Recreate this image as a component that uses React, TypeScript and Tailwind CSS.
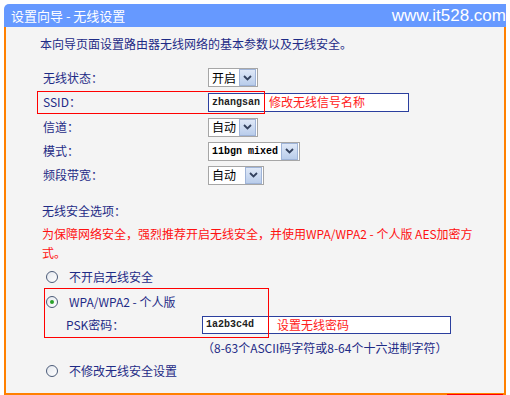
import React from "react";

const cjk = { fontFamily: '"Noto Sans CJK SC", "Liberation Sans", sans-serif' };
const mono = { fontFamily: '"Liberation Mono", "Noto Sans CJK SC", monospace' };

const Arrow = () => (
    <span className="mr-px flex h-[17px] w-[17px] items-center justify-center border border-[#9fb4d8] bg-gradient-to-b from-[#dfe8f7] to-[#b9cdeb]">
        <svg width="9" height="6" viewBox="0 0 9 6">
            <path d="M1 1 L4.5 4.5 L8 1" stroke="#33415e" strokeWidth="1.8" fill="none" />
        </svg>
    </span>
);

const Select = ({ value, width, isMono }: { value: string; width: string; isMono?: boolean }) => (
    <div className={`flex h-[19px] ${width} items-center border border-[#a6a6a6] bg-white`}>
        <span className={`flex-1 whitespace-nowrap pl-[3px] text-black ${isMono ? "text-[10px] font-bold" : "text-[12px]"}`} style={isMono ? mono : cjk}>
            {value}
        </span>
        <Arrow />
    </div>
);

const Radio = ({ checked }: { checked?: boolean }) => (
    <span className="flex h-[12px] w-[12px] items-center justify-center rounded-full border border-[#4b5b78] bg-gradient-to-br from-[#e4e8ee] to-white">
        {checked && <span className="h-[4px] w-[4px] rounded-full bg-[#2aa12a]" />}
    </span>
);

const rows = [
    { label: "无线状态：", h: "h-[23px]", field: <Select value="开启" width="w-[50px]" /> },
    {
        label: "SSID：",
        h: "h-[26px]",
        field: (
            <div className="flex h-[19px] w-[201px] items-center border border-[#2b3f9e] bg-white">
                <span className="pl-[3px] text-[10px] font-bold text-[#222]" style={mono}>zhangsan</span>
                <span className="ml-[9px] text-[12px] text-[#ff2020]" style={cjk}>修改无线信号名称</span>
            </div>
        ),
    },
    { label: "信道：", h: "h-[24px]", field: <Select value="自动" width="w-[50px]" /> },
    { label: "模式：", h: "h-[24px]", field: <Select value="11bgn mixed" width="w-[92px]" isMono /> },
    { label: "频段带宽：", h: "h-[24px]", field: <Select value="自动" width="w-[56px]" /> },
];

export default function App() {
    return (
        <div className="h-[395px] w-[510px] bg-white pl-[4px] pt-[4px]" style={cjk}>
            <div className="flex h-[23px] w-[502px] items-center justify-between rounded-tl-[5px] bg-[#6699ff] pl-[7px] text-white">
                <span className="text-[13px]">设置向导 - 无线设置</span>
                <span className="text-[17px] leading-none" style={{ fontFamily: '"Liberation Sans", sans-serif' }}>www.it528.com</span>
            </div>
            <div className="relative h-[368px] w-[502px] border-x-2 border-b-2 border-[#ff8000] bg-[#f4f4f4] pt-[9px] text-[12px] text-[#1e2b86]">
                <div className="pl-[34px] leading-[16px]">本向导页面设置路由器无线网络的基本参数以及无线安全。</div>

                <div className="mt-[14px] flex flex-col">
                    {rows.map((r) => (
                        <div key={r.label} className={`flex ${r.h} items-center`}>
                            <span className="w-[202px] pl-[37px]">{r.label}</span>
                            {r.field}
                        </div>
                    ))}
                </div>

                <div className="mt-[16px] pl-[36px] leading-[16px]">无线安全选项：</div>
                <div className="mt-[5px] whitespace-nowrap pl-[36px] leading-[19px] text-[#ff1010]">
                    为保障网络安全，强烈推荐开启无线安全，并使用WPA/WPA2 - 个人版 AES加密方
                    <br />
                    式。
                </div>

                <div className="mt-[5px] flex h-[20px] items-center pl-[40px]">
                    <Radio />
                    <span className="ml-[11px]">不开启无线安全</span>
                </div>
                <div className="mt-[5px] flex h-[20px] items-center pl-[40px]">
                    <Radio checked />
                    <span className="ml-[11px]">WPA/WPA2 - 个人版</span>
                </div>
                <div className="mt-[2px] flex h-[21px] items-center pl-[60px]">
                    <span className="w-[136px]">PSK密码：</span>
                    <div className="flex h-[18px] w-[249px] items-center border border-[#2b3f9e] bg-white">
                        <span className="pl-[3px] text-[10px] font-bold text-[#222]" style={mono}>1a2b3c4d</span>
                        <span className="ml-[23px] text-[12px] text-[#ff2020]">设置无线密码</span>
                    </div>
                </div>
                <div className="mt-[5px] h-[16px] pl-[196px] leading-[16px]">（8-63个ASCII码字符或8-64个十六进制字符）</div>
                <div className="mt-[5px] flex h-[20px] items-center pl-[40px]">
                    <Radio />
                    <span className="ml-[11px]">不修改无线安全设置</span>
                </div>

                <div className="absolute left-[31px] top-[64px] h-[23px] w-[228px] border border-[#ff0000]" />
                <div className="absolute left-[38px] top-[261px] h-[50px] w-[225px] border border-[#ff0000]" />
                <div className="absolute -bottom-[2px] left-[441px] h-px w-[56px] bg-[#ff0000]" />
            </div>
        </div>
    );
}
